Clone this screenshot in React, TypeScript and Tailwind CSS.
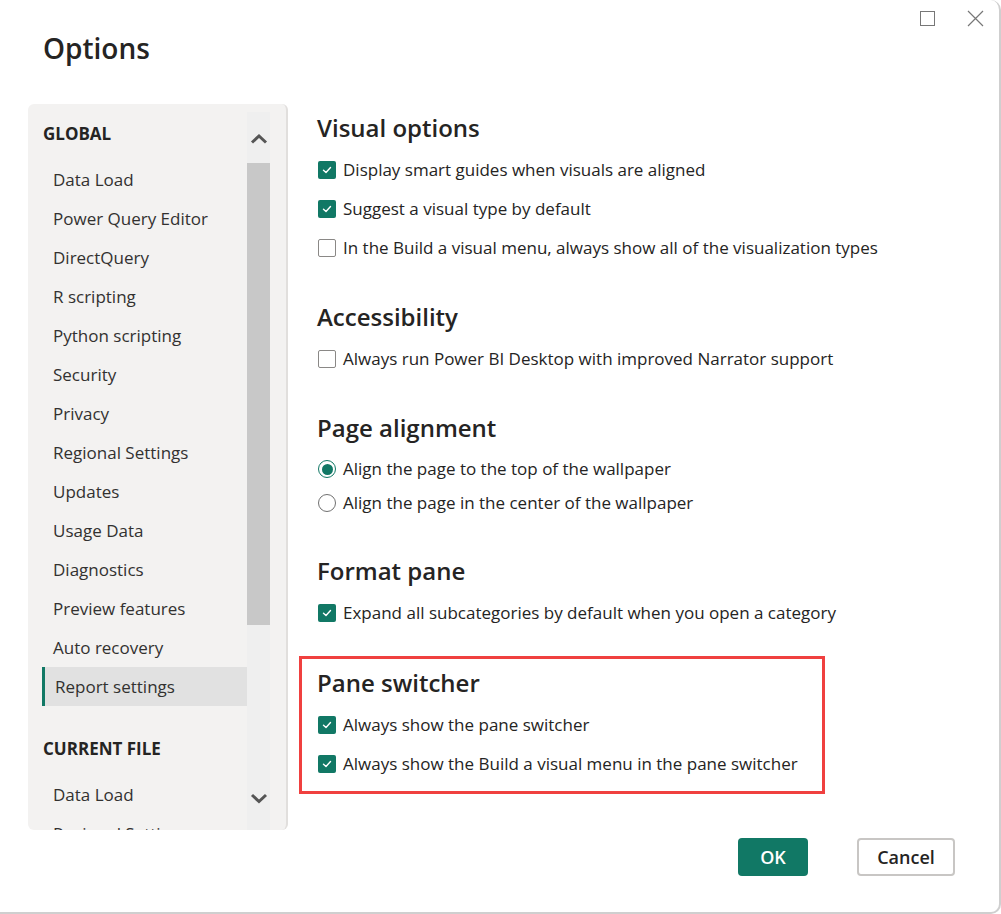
import React from "react";

const globalItems = [
  "Data Load",
  "Power Query Editor",
  "DirectQuery",
  "R scripting",
  "Python scripting",
  "Security",
  "Privacy",
  "Regional Settings",
  "Updates",
  "Usage Data",
  "Diagnostics",
  "Preview features",
  "Auto recovery",
  "Report settings",
];

const fileItems = ["Data Load", "Regional Settings"];

const Check: React.FC<{ checked: boolean; label: string }> = ({ checked, label }) => (
  <div className="flex items-center h-[39px]">
    {checked ? (
      <span className="flex items-center justify-center w-[18px] h-[18px] rounded-[2px] bg-[#117865] ml-[1px]">
        <svg width="12" height="12" viewBox="0 0 12 12">
          <polyline points="2.5,6.2 5,8.5 9.5,3.5" fill="none" stroke="white" strokeWidth="1.4" strokeLinecap="round" strokeLinejoin="round" />
        </svg>
      </span>
    ) : (
      <span className="w-[18px] h-[18px] rounded-[2px] border border-[#8a8886] bg-white ml-[1px]" />
    )}
    <span className="ml-[7px] text-[17px] text-[#252423]">{label}</span>
  </div>
);

const Radio: React.FC<{ checked: boolean; label: string }> = ({ checked, label }) => (
  <div className="flex items-center h-[34px]">
    {checked ? (
      <span className="flex items-center justify-center w-[18px] h-[18px] rounded-full border-[1.5px] border-[#117865] ml-[1px]">
        <span className="w-[11px] h-[11px] rounded-full bg-[#117865]" />
      </span>
    ) : (
      <span className="w-[18px] h-[18px] rounded-full border-[1.5px] border-[#707070] ml-[1px]" />
    )}
    <span className="ml-[7px] text-[17px] text-[#252423]">{label}</span>
  </div>
);

const Heading: React.FC<{ children: React.ReactNode }> = ({ children }) => (
  <h2 className="h-[32px] leading-[32px] text-[24px] font-semibold text-[#252423]">{children}</h2>
);

const Chevron: React.FC<{ down?: boolean }> = ({ down }) => (
  <svg width="18" height="12" viewBox="0 0 18 12">
    <polyline
      points={down ? "2,3 9,9.5 16,3" : "2,9.5 9,3 16,9.5"}
      fill="none"
      stroke="#555"
      strokeWidth="3"
    />
  </svg>
);

export default function App() {
  return (
    <div
      className="relative w-[1001px] h-[914px] bg-white border-r-2 border-b-2 border-[#cfcfcf] rounded-tr-[10px] rounded-br-[10px] overflow-hidden"
      style={{ fontFamily: '"Open Sans", "Noto Sans", sans-serif' }}
    >
      {/* window buttons */}
      <div className="absolute top-[10px] right-[15px] flex items-center gap-[32px]">
        <span className="w-[15px] h-[15px] border border-[#777]" />
        <svg width="17" height="17" viewBox="0 0 17 17">
          <path d="M1 1 L16 16 M16 1 L1 16" stroke="#777" strokeWidth="1.2" />
        </svg>
      </div>

      <div className="h-[104px] pt-[29px] pl-[43px]">
        <h1 className="text-[28px] leading-[38px] font-semibold text-[#252423]">Options</h1>
      </div>

      <div className="flex pl-[28px]">
        {/* sidebar */}
        <div className="flex w-[260px] h-[726px] bg-[#f3f2f1] rounded-[6px] border-r-2 border-[#e1dfdd] overflow-hidden">
          <div className="w-[219px] pl-[14px] text-[#323130]">
            <div className="mt-[18px] h-[24px] leading-[24px] text-[17px] font-bold text-[#252423] ml-[1px]">GLOBAL</div>
            <div className="mt-[14px]">
              {globalItems.map((item) => {
                const active = item === "Report settings";
                return (
                  <div
                    key={item}
                    className={
                      active
                        ? "flex items-center h-[39px] bg-[#e1e1e1] border-l-[3px] border-[#117865] pl-[10px] text-[17px]"
                        : "flex items-center h-[39px] pl-[11px] text-[17px]"
                    }
                  >
                    {item}
                  </div>
                );
              })}
            </div>
            <div className="mt-[31px] h-[24px] leading-[24px] text-[17px] font-bold text-[#252423] ml-[1px]">CURRENT FILE</div>
            <div className="mt-[14px]">
              {fileItems.map((item) => (
                <div key={item} className="flex items-center h-[39px] pl-[11px] text-[17px]">
                  {item}
                </div>
              ))}
            </div>
          </div>
          <div className="flex flex-col w-[23px] mt-[8px] bg-[#efefef]">
            <div className="flex items-center justify-center h-[51px] pt-[2px]">
              <Chevron />
            </div>
            <div className="h-[462px] bg-[#c8c8c8]" />
            <div className="flex-1 flex items-end justify-center pb-[26px]">
              <Chevron down />
            </div>
          </div>
        </div>

        {/* content */}
        <div className="ml-[29px] pt-[8px]">
          <Heading>Visual options</Heading>
          <div className="mt-[6px]">
            <Check checked label="Display smart guides when visuals are aligned" />
            <Check checked label="Suggest a visual type by default" />
            <Check checked={false} label="In the Build a visual menu, always show all of the visualization types" />
          </div>

          <div className="mt-[34px]">
            <Heading>Accessibility</Heading>
            <div className="mt-[6px]">
              <Check checked={false} label="Always run Power BI Desktop with improved Narrator support" />
            </div>
          </div>

          <div className="mt-[34px]">
            <Heading>Page alignment</Heading>
            <div className="mt-[8px]">
              <Radio checked label="Align the page to the top of the wallpaper" />
              <Radio checked={false} label="Align the page in the center of the wallpaper" />
            </div>
          </div>

          <div className="mt-[35px]">
            <Heading>Format pane</Heading>
            <div className="mt-[6px]">
              <Check checked label="Expand all subcategories by default when you open a category" />
            </div>
          </div>

          <div className="mt-[24px] -ml-[18px] w-[526px] border-[3px] border-[#f0403f] pl-[15px] pt-[8px] pb-[8px]">
            <Heading>Pane switcher</Heading>
            <div className="mt-[6px]">
              <Check checked label="Always show the pane switcher" />
              <Check checked label="Always show the Build a visual menu in the pane switcher" />
            </div>
          </div>
        </div>
      </div>

      {/* footer */}
      <div className="flex justify-end gap-[49px] pr-[44px] mt-[8px]">
        <button className="w-[70px] h-[38px] rounded-[4px] bg-[#117865] text-white text-[18px] font-semibold">OK</button>
        <button className="w-[98px] h-[38px] rounded-[4px] border-2 border-[#c8c6c4] bg-white text-[#252423] text-[18px] font-semibold">
          Cancel
        </button>
      </div>
    </div>
  );
}
